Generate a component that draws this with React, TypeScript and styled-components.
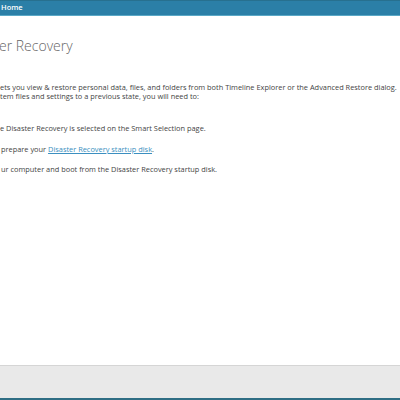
import React from "react";
import styled, { createGlobalStyle } from "styled-components";

const Global = createGlobalStyle`
  html, body { margin: 0; padding: 0; background: #ffffff; overflow: hidden; }
  body { font-family: "Open Sans", "Noto Sans", sans-serif; }
`;

const Page = styled.div`
  width: 400px;
  height: 400px;
  display: flex;
  flex-direction: column;
  overflow: hidden;
`;

const Header = styled.div`
  height: 16px;
  box-sizing: border-box;
  background: #2b7fa7;
  border-top: 1px solid #27708f;
  border-bottom: 1px solid #5aa8c6;
  display: flex;
  align-items: center;
  padding-left: 1px;
`;

const Crumb = styled.span`
  color: #ffffff;
  font-size: 7.5px;
  font-weight: 600;
  line-height: 1;
`;

const Content = styled.div`
  flex: 1;
  display: flex;
  flex-direction: column;
  padding-top: 20px;
`;

const Title = styled.h1`
  margin: 0 0 0 -1px;
  font-family: "Open Sans", sans-serif;
  font-weight: 300;
  font-size: 14px;
  line-height: 20px;
  color: #666666;
  white-space: nowrap;
`;

const Para = styled.p`
  margin: 27px 0 0 0;
  font-size: 7.4px;
  line-height: 8.6px;
  color: #444444;
  white-space: nowrap;
`;

const Steps = styled.div`
  margin-top: 24px;
  display: flex;
  flex-direction: column;
  gap: 11px;
`;

const Step = styled.div<{ $indent?: number }>`
  font-size: 7.4px;
  line-height: 9.5px;
  color: #444444;
  white-space: nowrap;
  padding-left: ${(p) => p.$indent ?? 0}px;
`;

const Link = styled.a`
  color: #3b8fc0;
  text-decoration: underline;
`;

const Footer = styled.div`
  height: 35px;
  box-sizing: border-box;
  background: #e9e9e9;
  border-top: 1px solid #d5d5d5;
  border-bottom: 2px solid #2f6e84;
`;

export default function App() {
  return (
    <>
      <Global />
      <Page>
        <Header>
          <Crumb>Home</Crumb>
        </Header>
        <Content>
          <Title>er Recovery</Title>
          <Para>
            ets you view &amp; restore personal data, files, and folders from both Timeline Explorer or the Advanced Restore dialog.
            <br />
            tem files and settings to a previous state, you will need to:
          </Para>
          <Steps>
            <Step>e Disaster Recovery is selected on the Smart Selection page.</Step>
            <Step $indent={1}>
              prepare your <Link>Disaster Recovery startup disk</Link>.
            </Step>
            <Step $indent={1}>ur computer and boot from the Disaster Recovery startup disk.</Step>
          </Steps>
        </Content>
        <Footer />
      </Page>
    </>
  );
}
